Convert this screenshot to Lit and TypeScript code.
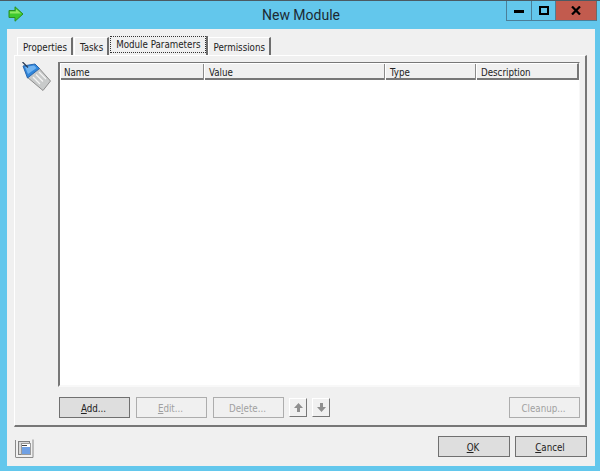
import { LitElement, html, css } from "lit";
import { customElement } from "lit/decorators.js";

@customElement("app-root")
export class AppRoot extends LitElement {
  static styles = css`
    :host { display: block; width: 600px; height: 471px; overflow: hidden; }
    * { box-sizing: border-box; }
    .win { width: 600px; height: 471px; background: #63c7ec; border-top: 1px solid #4b5a63; display: flex; flex-direction: column; font-family: "DejaVu Sans", sans-serif; font-stretch: condensed; font-size: 9.7px; color: #1a1a1a; }
    .titlebar { height: 28px; flex: none; display: grid; grid-template-columns: 1fr auto 1fr; align-items: start; }
    .appicon { margin: 5px 0 0 8px; display: block; }
    .title { font-family: "Roboto", sans-serif; font-stretch: normal; font-size: 14px; line-height: 28px; color: #1c2a33; padding-left: 2px; }
    .wbtns { justify-self: end; display: flex; height: 20px; margin-right: 3px; border: 1px solid #4b7f98; border-top: 0; border-right-color: #6b6b6b; }
    .wb { display: flex; align-items: center; justify-content: center; width: 25px; border-right: 1px solid #4b7f98; padding-top: 2px; }
    .wb.max { width: 23px; border-right: 0; padding: 0 0 1px; }
    .wb.close { width: 41px; background: #c25b4e; border-right: 0; border-left: 1px solid #4b7f98; padding: 0 0 1px; }
    .body { flex: 1; margin: 0 5px 5px 7px; background: #f0f0f0; display: flex; flex-direction: column; padding: 8px 8px 0 7px; }
    .tabs { display: flex; height: 18px; flex: none; padding-left: 3px; align-items: flex-end; }
    .tab { height: 18px; padding: 1px 4px 0 5px; line-height: 18px; background: #f0f0f0; border-top: 1px solid #fff; border-left: 1px solid #fff; border-right: 2px solid #6e6e6e; color: #222; white-space: nowrap; margin-right: 1px; }
    .tab.active { height: 19px; margin-right: 0; padding: 0; border: 0; border-right: 2px solid #6e6e6e; }
    .focus { display: block; border: 1px dotted #333; height: 17px; line-height: 15px; padding: 0 4px 0 5px; }
    .panel { flex: none; height: 372px; background: #f0f0f0; border-top: 1px solid #fff; border-left: 1px solid #fff; border-right: 2px solid #777; border-bottom: 2px solid #777; display: flex; padding: 6px 5px 0 7px; }
    .side { width: 36px; flex: none; }
    .tag { display: block; }
    .main { flex: 1; display: flex; flex-direction: column; min-width: 0; }
    .grid { height: 325px; flex: none; background: #fff; border-left: 2px solid #777; border-top: 1px solid #777; border-right: 1px solid #f8f8f8; border-bottom: 2px solid #f8f8f8; display: flex; flex-direction: column; }
    .thead { height: 17px; flex: none; display: grid; grid-template-columns: 144px 181px 91px 1fr; background: #f0f0f0; border-bottom: 2px solid #777; border-top: 1px solid #fff; border-right: 2px solid #777; }
    .th { border-right: 1px solid #8a8a8a; padding: 1px 0 0 4px; line-height: 15px; color: #222; border-left: 1px solid #fff; }
    .th:first-child { padding-left: 3px; }
    .th:last-child { border-right: 0; }
    .row { display: flex; align-items: flex-start; margin-top: 10px; padding-left: 1px; }
    .btn { width: 71px; height: 21px; flex: none; border: 1px solid #adadad; background: #f0f0f0; display: flex; align-items: center; justify-content: center; color: #a0a0a0; margin-right: 6px; padding: 1px 2px 0 0; }
    .btn.on { background: #dedede; border-color: #707070; color: #222; }
    .u { text-decoration: underline; }
    .arrow { width: 18px; height: 19px; flex: none; display: flex; align-items: center; justify-content: center; border-top: 1px solid #fff; border-left: 1px solid #fff; border-right: 1px solid #777; border-bottom: 1px solid #777; margin: 1px 5px 0 0; }
    .del { margin-right: 5px; }
    .spacer { flex: 1; }
    .row .btn:last-child { margin-right: 0; }
    .footer { display: flex; align-items: flex-start; padding: 9px 0 0 1px; }
    .footer .btn { width: 72px; margin-right: 5px; }
    .footer .btn:last-child { margin-right: 0; }
    .small { display: block; margin-top: 3px; }
  `;

  render() {
    return html`
      <div class="win">
        <div class="titlebar">
          <svg class="appicon" width="16" height="16" viewBox="0 0 16 16">
            <path d="M1 4.500h6V0.800L15 8 7 15.200V11.500H1z" fill="#3fc92f" stroke="#2c8f22"/>
            <path d="M2 5.500h6V3L13 7.500H2z" fill="#8fe864"/>
          </svg>
          <div class="title">New Module</div>
          <div class="wbtns">
            <div class="wb"><svg width="10" height="3"><rect width="10" height="3" fill="#000"/></svg></div>
            <div class="wb max"><svg width="10" height="9"><rect x="1" y="1" width="8" height="7" fill="none" stroke="#000" stroke-width="2"/></svg></div>
            <div class="wb close"><svg width="10" height="9" viewBox="0 0 10 9"><path d="M1 0.500L9 8.500M9 0.500L1 8.500" stroke="#000" stroke-width="2.200"/></svg></div>
          </div>
        </div>
        <div class="body">
          <div class="tabs">
            <div class="tab">Properties</div>
            <div class="tab">Tasks</div>
            <div class="tab active"><span class="focus">Module Parameters</span></div>
            <div class="tab">Permissions</div>
          </div>
          <div class="panel">
            <div class="side">
              <svg class="tag" width="30" height="31" viewBox="0 0 30 31">
                <path d="M5 15L16 5 28.500 19 21 28.500z" fill="#c8caca" stroke="#8e8e8e"/>
                <path d="M1 4L13 2 17.500 6.500 5.500 16z" fill="#2f86dc" stroke="#2a66ac"/>
                <path d="M3 5L12 3.500 14.500 6 6 12z" fill="#72b4f0"/>
                <path d="M0.500 0L6 5.500" stroke="#2a3a55" stroke-width="1.200"/>
                <path d="M11 15l7 7M14 12.500l7 7M17 10l7 7" stroke="#f4f4f4" stroke-width="1.300"/>
              </svg>
            </div>
            <div class="main">
              <div class="grid">
                <div class="thead">
                  <div class="th">Name</div><div class="th">Value</div><div class="th">Type</div><div class="th">Description</div>
                </div>
              </div>
              <div class="row">
                <div class="btn on"><span><span class="u">A</span>dd...</span></div>
                <div class="btn"><span><span class="u">E</span>dit...</span></div>
                <div class="btn del"><span>De<span class="u">l</span>ete...</span></div>
                <div class="arrow"><svg width="11" height="11" viewBox="0 0 11 11"><path d="M5.500 1L10 6H7v4H4V6H1z" fill="#8f8f8f"/></svg></div>
                <div class="arrow"><svg width="11" height="11" viewBox="0 0 11 11"><path d="M5.500 10L10 5H7V1H4v4H1z" fill="#8f8f8f"/></svg></div>
                <div class="spacer"></div>
                <div class="btn">Cleanup...</div>
              </div>
            </div>
          </div>
          <div class="footer">
            <svg class="small" width="19" height="19" viewBox="0 0 19 19">
              <path d="M0.500 18.500V1M18 0.500V18.500H1" stroke="#8a8a8a" fill="none"/>
              <rect x="3.500" y="2.500" width="11" height="13" fill="#d8d8d8" stroke="#808080"/>
              <rect x="6.500" y="4.500" width="9" height="11" fill="#fff" stroke="#9a9a9a"/>
              <rect x="7" y="8" width="8" height="7" fill="#6fa0e4"/>
              <path d="M7 6.500h5" stroke="#444"/>
            </svg>
            <div class="spacer"></div>
            <div class="btn on"><span><span class="u">O</span>K</span></div>
            <div class="btn on"><span><span class="u">C</span>ancel</span></div>
          </div>
        </div>
      </div>
    `;
  }
}
